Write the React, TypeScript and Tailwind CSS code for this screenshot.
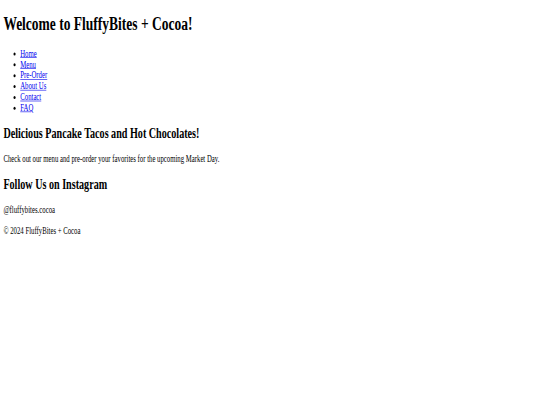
import React from 'react';

const links = ['Home', 'Menu', 'Pre-Order', 'About Us', 'Contact', 'FAQ'];

export default function App() {
  return (
    <div className="w-[540px] h-[405px] overflow-hidden bg-white">
      {/* page rendered at 1280 wide, then squeezed to the screenshot size */}
      <div
        className="w-[1280px] h-[672px] origin-top-left scale-x-[0.421875] scale-y-[0.603] text-black text-[16px] leading-[normal]"
        style={{ fontFamily: '"Liberation Serif", "Times New Roman", serif' }}
      >
        <div className="mx-2 flow-root">
          <header>
            <h1 className="text-[32px] font-bold my-[21.44px]">Welcome to FluffyBites + Cocoa!</h1>
            <nav>
              <ul className="list-disc pl-10 my-4">
                {links.map(l => (
                  <li key={l}>
                    <a href="#" className="text-[#0000ee] underline">{l}</a>
                  </li>
                ))}
              </ul>
            </nav>
          </header>
          <main>
            <section>
              <h2 className="text-[24px] font-bold my-[19.92px]">Delicious Pancake Tacos and Hot Chocolates!</h2>
              <p className="my-4">Check out our menu and pre-order your favorites for the upcoming Market Day.</p>
            </section>
            <section>
              <h2 className="text-[24px] font-bold my-[19.92px]">Follow Us on Instagram</h2>
              <p className="my-4">@fluffybites.cocoa</p>
            </section>
          </main>
          <footer>
            <p className="my-4">© 2024 FluffyBites + Cocoa</p>
          </footer>
        </div>
      </div>
    </div>
  );
}
